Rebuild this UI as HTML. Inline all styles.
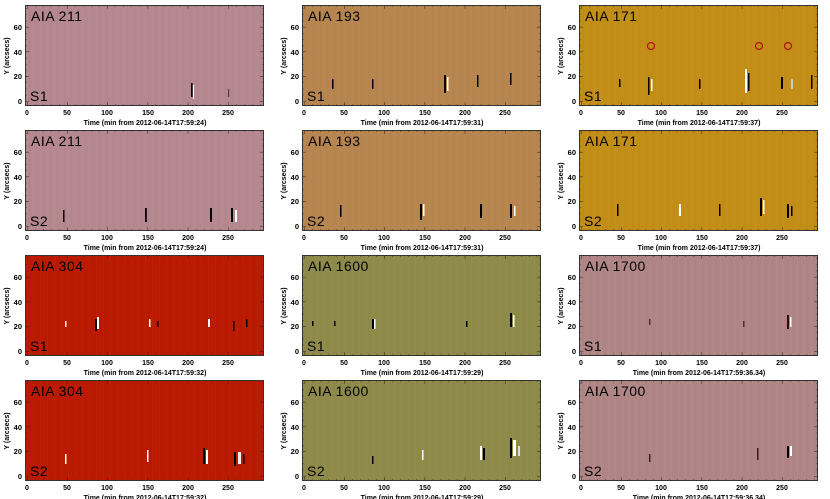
<!DOCTYPE html>
<html><head><meta charset="utf-8"><style>
html,body{margin:0;padding:0;background:#fff;width:830px;height:499px;overflow:hidden}
svg{display:block}
text{font-family:"Liberation Sans",sans-serif;fill:#000}
.tl{font-size:7.5px;font-weight:bold}
.xl{font-size:7px;font-weight:bold}
.ti{font-size:14px;letter-spacing:0.5px}
.yl{font-size:7px;font-weight:bold}
</style></head><body>
<svg width="830" height="499" viewBox="0 0 830 499" xmlns="http://www.w3.org/2000/svg">
<defs>
<pattern id="xm" x="2" y="0" width="8.04" height="101" patternUnits="userSpaceOnUse"><path d="M0,0v2M0,101v-2" stroke="#222" stroke-width="0.8"/></pattern>
<pattern id="xM" x="2" y="0" width="40.2" height="101" patternUnits="userSpaceOnUse"><path d="M0,0v4M0,101v-4" stroke="#222" stroke-width="0.9"/></pattern>
<pattern id="ym" x="0" y="96" width="239" height="6.175" patternUnits="userSpaceOnUse"><path d="M0,0h2M239,0h-2" stroke="#222" stroke-width="0.8"/></pattern>
<pattern id="yM" x="0" y="96" width="239" height="24.7" patternUnits="userSpaceOnUse"><path d="M0,0h4M239,0h-4" stroke="#222" stroke-width="0.9"/></pattern>
<pattern id="vs" x="0" y="0" width="7" height="101" patternUnits="userSpaceOnUse"><rect x="1" width="0.6" height="101" fill="#fff" opacity="0.03"/><rect x="4.4" width="0.5" height="101" fill="#000" opacity="0.025"/></pattern>
<g id="fr">
<rect width="239" height="101" fill="url(#vs)"/>
<rect width="239" height="101" fill="url(#xm)"/>
<rect width="239" height="101" fill="url(#xM)"/>
<rect width="239" height="101" fill="url(#ym)"/>
<rect width="239" height="101" fill="url(#yM)"/>
<rect x="0.5" y="0.5" width="238" height="100" fill="none" stroke="#333" stroke-width="1"/>
</g>
<g id="tk">
<text class="tl" x="-3" y="99" text-anchor="end">0</text>
<text class="tl" x="-3" y="74" text-anchor="end">20</text>
<text class="tl" x="-3" y="50" text-anchor="end">40</text>
<text class="tl" x="-3" y="25" text-anchor="end">60</text>
</g>
</defs>

<!-- Row 1 -->
<g transform="translate(25,5)">
<rect width="239" height="101" fill="#b5878f"/>
<rect x="166" y="78" width="1.6" height="14" fill="#000"/><rect x="168" y="80" width="1" height="14" fill="#fff"/>
<rect x="203" y="84" width="1.2" height="8" fill="#5a3a40"/>
<use href="#fr"/><use href="#tk"/>
<text class="ti" x="6" y="16">AIA  211</text><text class="ti" x="5" y="96">S1</text>
</g>
<g transform="translate(302,5)">
<rect width="239" height="101" fill="#b78550"/>
<rect x="142" y="70" width="2" height="18" fill="#000"/><rect x="145" y="72" width="1.5" height="14" fill="#fff"/>
<rect x="175" y="70" width="1.5" height="12" fill="#000"/><rect x="208" y="68" width="1.5" height="12" fill="#000"/><rect x="70" y="74" width="1.5" height="10" fill="#000"/><rect x="30" y="74" width="1.5" height="10" fill="#000"/>
<use href="#fr"/><use href="#tk"/>
<text class="ti" x="6" y="16">AIA  193</text><text class="ti" x="5" y="96">S1</text>
</g>
<g transform="translate(579,5)">
<rect width="239" height="101" fill="#c38e18"/>
<rect x="69" y="72" width="1.5" height="18" fill="#000"/><rect x="72" y="74" width="1.5" height="12" fill="#fff"/>
<rect x="166" y="64" width="2" height="24" fill="#fff"/><rect x="169" y="68" width="1.5" height="18" fill="#000"/>
<rect x="120" y="74" width="1.5" height="10" fill="#000"/><rect x="202" y="72" width="2" height="12" fill="#000"/><rect x="212" y="74" width="2" height="10" fill="#ccc"/><rect x="232" y="70" width="1.5" height="14" fill="#000"/><rect x="40" y="74" width="1.5" height="8" fill="#000"/>
<use href="#fr"/><use href="#tk"/>
<circle cx="72" cy="41" r="3.5" fill="none" stroke="#b01010" stroke-width="1.2"/>
<circle cx="180" cy="41" r="3.5" fill="none" stroke="#b01010" stroke-width="1.2"/>
<circle cx="209" cy="41" r="3.5" fill="none" stroke="#b01010" stroke-width="1.2"/>
<text class="ti" x="6" y="16">AIA  171</text><text class="ti" x="5" y="96">S1</text>
</g>

<!-- Row 2 -->
<g transform="translate(25,130)">
<rect width="239" height="101" fill="#b5878f"/>
<rect x="38" y="80" width="1.5" height="12" fill="#000"/><rect x="120" y="78" width="1.8" height="14" fill="#000"/><rect x="185" y="78" width="2" height="14" fill="#000"/><rect x="206" y="78" width="2" height="14" fill="#000"/><rect x="210" y="80" width="2" height="12" fill="#fff"/>
<use href="#fr"/><use href="#tk"/>
<text class="ti" x="6" y="16">AIA  211</text><text class="ti" x="5" y="96">S2</text>
</g>
<g transform="translate(302,130)">
<rect width="239" height="101" fill="#b78550"/>
<rect x="38" y="75" width="1.5" height="12" fill="#000"/><rect x="118" y="74" width="2" height="16" fill="#000"/><rect x="121" y="74" width="1.5" height="12" fill="#fff"/><rect x="178" y="74" width="2" height="14" fill="#000"/><rect x="208" y="74" width="2" height="14" fill="#000"/><rect x="212" y="76" width="1.5" height="10" fill="#fff"/>
<use href="#fr"/><use href="#tk"/>
<text class="ti" x="6" y="16">AIA  193</text><text class="ti" x="5" y="96">S2</text>
</g>
<g transform="translate(579,130)">
<rect width="239" height="101" fill="#c38e18"/>
<rect x="38" y="74" width="1.5" height="12" fill="#000"/><rect x="100" y="74" width="2" height="12" fill="#fff"/><rect x="140" y="74" width="1.5" height="12" fill="#000"/><rect x="181" y="68" width="2" height="18" fill="#000"/><rect x="184" y="70" width="1.5" height="14" fill="#fff"/><rect x="208" y="74" width="2" height="14" fill="#000"/><rect x="212" y="76" width="1.5" height="10" fill="#000"/>
<use href="#fr"/><use href="#tk"/>
<text class="ti" x="6" y="16">AIA  171</text><text class="ti" x="5" y="96">S2</text>
</g>

<!-- Row 3 -->
<g transform="translate(25,255)">
<rect width="239" height="101" fill="#bb1a02"/>
<rect x="70" y="64" width="2" height="12" fill="#000"/><rect x="72" y="62" width="2" height="12" fill="#fff"/><rect x="40" y="66" width="1.5" height="6" fill="#ffd"/><rect x="124" y="64" width="1.5" height="8" fill="#fff"/><rect x="132" y="66" width="1.5" height="6" fill="#000"/><rect x="183" y="64" width="2" height="8" fill="#fff"/><rect x="208" y="66" width="1.5" height="10" fill="#000"/><rect x="221" y="64" width="1.5" height="8" fill="#000"/>
<use href="#fr"/><use href="#tk"/>
<text class="ti" x="6" y="16">AIA  304</text><text class="ti" x="5" y="96">S1</text>
</g>
<g transform="translate(302,255)">
<rect width="239" height="101" fill="#8e8b4a"/>
<rect x="70" y="64" width="2" height="10" fill="#000"/><rect x="72" y="64" width="1.5" height="10" fill="#fff"/><rect x="10" y="66" width="1.5" height="5" fill="#000"/><rect x="32" y="66" width="1.5" height="5" fill="#000"/><rect x="164" y="66" width="1.5" height="6" fill="#000"/><rect x="208" y="58" width="2" height="14" fill="#000"/><rect x="211" y="60" width="1.5" height="12" fill="#fff"/>
<use href="#fr"/><use href="#tk"/>
<text class="ti" x="6" y="16">AIA  1600</text><text class="ti" x="5" y="96">S1</text>
</g>
<g transform="translate(579,255)">
<rect width="239" height="101" fill="#b08586"/>
<rect x="208" y="60" width="2" height="14" fill="#2a1010"/><rect x="211" y="62" width="1.5" height="10" fill="#fff"/><rect x="70" y="64" width="1.5" height="6" fill="#5a2a2a"/><rect x="164" y="66" width="1.5" height="6" fill="#5a2a2a"/>
<use href="#fr"/><use href="#tk"/>
<text class="ti" x="6" y="16">AIA  1700</text><text class="ti" x="5" y="96">S1</text>
</g>

<!-- Row 4 -->
<g transform="translate(25,380)">
<rect width="239" height="101" fill="#bb1a02"/>
<rect x="40" y="74" width="1.5" height="10" fill="#ffd"/><rect x="122" y="70" width="1.5" height="12" fill="#fff"/><rect x="178" y="68" width="2" height="16" fill="#000"/><rect x="181" y="70" width="2" height="14" fill="#fff"/><rect x="209" y="72" width="2" height="14" fill="#000"/><rect x="213" y="72" width="3" height="12" fill="#eee"/><rect x="218" y="74" width="1.5" height="10" fill="#000"/>
<use href="#fr"/><use href="#tk"/>
<text class="ti" x="6" y="16">AIA  304</text><text class="ti" x="5" y="96">S2</text>
</g>
<g transform="translate(302,380)">
<rect width="239" height="101" fill="#8e8b4a"/>
<rect x="70" y="76" width="1.5" height="8" fill="#000"/><rect x="120" y="70" width="1.5" height="10" fill="#fff"/><rect x="178" y="66" width="2" height="14" fill="#fff"/><rect x="181" y="68" width="2" height="12" fill="#000"/><rect x="208" y="58" width="2" height="20" fill="#000"/><rect x="211" y="60" width="3" height="16" fill="#fff"/><rect x="216" y="66" width="2" height="10" fill="#ddd"/>
<use href="#fr"/><use href="#tk"/>
<text class="ti" x="6" y="16">AIA  1600</text><text class="ti" x="5" y="96">S2</text>
</g>
<g transform="translate(579,380)">
<rect width="239" height="101" fill="#b08586"/>
<rect x="70" y="74" width="1.5" height="8" fill="#3a1a1a"/><rect x="178" y="68" width="1.5" height="12" fill="#3a1a1a"/><rect x="208" y="66" width="2" height="12" fill="#000"/><rect x="211" y="66" width="2" height="10" fill="#fff"/>
<use href="#fr"/><use href="#tk"/>
<text class="ti" x="6" y="16">AIA  1700</text><text class="ti" x="5" y="96">S2</text>
</g>

<!-- Axis tick labels & titles -->
<g class="xl">
<g transform="translate(25,115)"><text x="2" text-anchor="middle">0</text><text x="42" text-anchor="middle">50</text><text x="82" text-anchor="middle">100</text><text x="123" text-anchor="middle">150</text><text x="163" text-anchor="middle">200</text><text x="203" text-anchor="middle">250</text><text x="120" y="10" text-anchor="middle">Time (min from 2012-06-14T17:59:24)</text></g>
<g transform="translate(302,115)"><text x="2" text-anchor="middle">0</text><text x="42" text-anchor="middle">50</text><text x="82" text-anchor="middle">100</text><text x="123" text-anchor="middle">150</text><text x="163" text-anchor="middle">200</text><text x="203" text-anchor="middle">250</text><text x="120" y="10" text-anchor="middle">Time (min from 2012-06-14T17:59:31)</text></g>
<g transform="translate(579,115)"><text x="2" text-anchor="middle">0</text><text x="42" text-anchor="middle">50</text><text x="82" text-anchor="middle">100</text><text x="123" text-anchor="middle">150</text><text x="163" text-anchor="middle">200</text><text x="203" text-anchor="middle">250</text><text x="120" y="10" text-anchor="middle">Time (min from 2012-06-14T17:59:37)</text></g>
<g transform="translate(25,240)"><text x="2" text-anchor="middle">0</text><text x="42" text-anchor="middle">50</text><text x="82" text-anchor="middle">100</text><text x="123" text-anchor="middle">150</text><text x="163" text-anchor="middle">200</text><text x="203" text-anchor="middle">250</text><text x="120" y="10" text-anchor="middle">Time (min from 2012-06-14T17:59:24)</text></g>
<g transform="translate(302,240)"><text x="2" text-anchor="middle">0</text><text x="42" text-anchor="middle">50</text><text x="82" text-anchor="middle">100</text><text x="123" text-anchor="middle">150</text><text x="163" text-anchor="middle">200</text><text x="203" text-anchor="middle">250</text><text x="120" y="10" text-anchor="middle">Time (min from 2012-06-14T17:59:31)</text></g>
<g transform="translate(579,240)"><text x="2" text-anchor="middle">0</text><text x="42" text-anchor="middle">50</text><text x="82" text-anchor="middle">100</text><text x="123" text-anchor="middle">150</text><text x="163" text-anchor="middle">200</text><text x="203" text-anchor="middle">250</text><text x="120" y="10" text-anchor="middle">Time (min from 2012-06-14T17:59:37)</text></g>
<g transform="translate(25,365)"><text x="2" text-anchor="middle">0</text><text x="42" text-anchor="middle">50</text><text x="82" text-anchor="middle">100</text><text x="123" text-anchor="middle">150</text><text x="163" text-anchor="middle">200</text><text x="203" text-anchor="middle">250</text><text x="120" y="10" text-anchor="middle">Time (min from 2012-06-14T17:59:32)</text></g>
<g transform="translate(302,365)"><text x="2" text-anchor="middle">0</text><text x="42" text-anchor="middle">50</text><text x="82" text-anchor="middle">100</text><text x="123" text-anchor="middle">150</text><text x="163" text-anchor="middle">200</text><text x="203" text-anchor="middle">250</text><text x="120" y="10" text-anchor="middle">Time (min from 2012-06-14T17:59:29)</text></g>
<g transform="translate(579,365)"><text x="2" text-anchor="middle">0</text><text x="42" text-anchor="middle">50</text><text x="82" text-anchor="middle">100</text><text x="123" text-anchor="middle">150</text><text x="163" text-anchor="middle">200</text><text x="203" text-anchor="middle">250</text><text x="120" y="10" text-anchor="middle">Time (min from 2012-06-14T17:59:36.34)</text></g>
<g transform="translate(25,490)"><text x="2" text-anchor="middle">0</text><text x="42" text-anchor="middle">50</text><text x="82" text-anchor="middle">100</text><text x="123" text-anchor="middle">150</text><text x="163" text-anchor="middle">200</text><text x="203" text-anchor="middle">250</text><text x="120" y="10" text-anchor="middle">Time (min from 2012-06-14T17:59:32)</text></g>
<g transform="translate(302,490)"><text x="2" text-anchor="middle">0</text><text x="42" text-anchor="middle">50</text><text x="82" text-anchor="middle">100</text><text x="123" text-anchor="middle">150</text><text x="163" text-anchor="middle">200</text><text x="203" text-anchor="middle">250</text><text x="120" y="10" text-anchor="middle">Time (min from 2012-06-14T17:59:29)</text></g>
<g transform="translate(579,490)"><text x="2" text-anchor="middle">0</text><text x="42" text-anchor="middle">50</text><text x="82" text-anchor="middle">100</text><text x="123" text-anchor="middle">150</text><text x="163" text-anchor="middle">200</text><text x="203" text-anchor="middle">250</text><text x="120" y="10" text-anchor="middle">Time (min from 2012-06-14T17:59:36.34)</text></g>
</g>
<g class="yl">
<text transform="translate(9,56) rotate(-90)" text-anchor="middle">Y (arcsecs)</text>
<text transform="translate(286,56) rotate(-90)" text-anchor="middle">Y (arcsecs)</text>
<text transform="translate(563,56) rotate(-90)" text-anchor="middle">Y (arcsecs)</text>
<text transform="translate(9,181) rotate(-90)" text-anchor="middle">Y (arcsecs)</text>
<text transform="translate(286,181) rotate(-90)" text-anchor="middle">Y (arcsecs)</text>
<text transform="translate(563,181) rotate(-90)" text-anchor="middle">Y (arcsecs)</text>
<text transform="translate(9,306) rotate(-90)" text-anchor="middle">Y (arcsecs)</text>
<text transform="translate(286,306) rotate(-90)" text-anchor="middle">Y (arcsecs)</text>
<text transform="translate(563,306) rotate(-90)" text-anchor="middle">Y (arcsecs)</text>
<text transform="translate(9,431) rotate(-90)" text-anchor="middle">Y (arcsecs)</text>
<text transform="translate(286,431) rotate(-90)" text-anchor="middle">Y (arcsecs)</text>
<text transform="translate(563,431) rotate(-90)" text-anchor="middle">Y (arcsecs)</text>
</g>
</svg>
</body></html>
